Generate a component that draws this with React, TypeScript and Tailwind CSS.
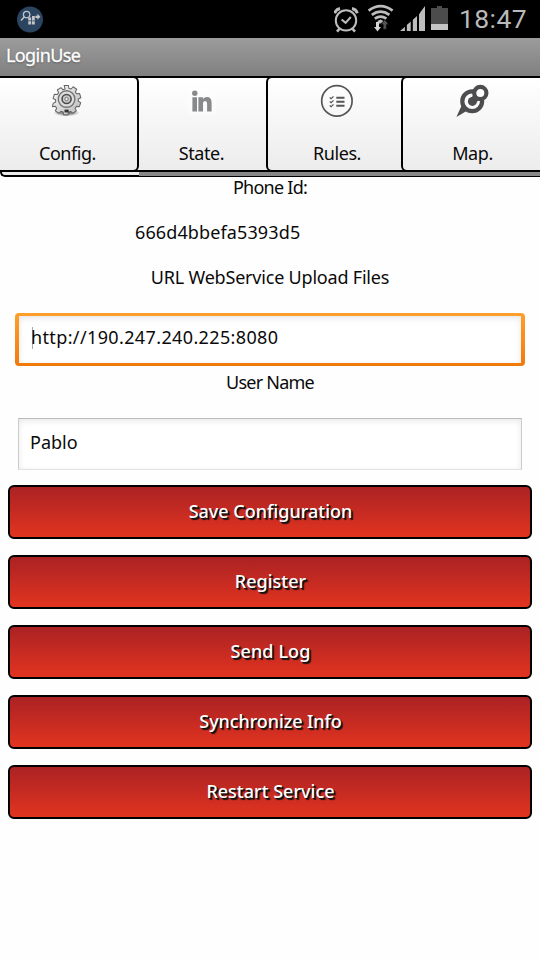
import React from 'react';

function StatusBar() {
  return (
    <div className="flex h-[38px] bg-black">
      <svg className="ml-[17px] mt-[6px] h-[27px] w-[27px]" viewBox="0 0 27 27">
        <circle cx="13" cy="13.5" r="13" fill="#2b4560" />
        <g fill="none" stroke="#bfc4c8">
          <circle cx="9.6" cy="8.6" r="3.2" strokeWidth="1.3" />
          <path d="M7.3 11 4 14.6" strokeWidth="1.5" />
        </g>
        <path fill="#c4c4c4" d="M11.2 11.5h3v3h-3zM15 10h2.8v4.5H15zM11.2 15.3h3v3.2h-3zM15 15.3h2.8v3.2H15zM18.4 9.7h2V7.8l3 3-3 3v-1.9h-2z" />
      </svg>
      <svg className="ml-auto h-[38px] w-[120px]" viewBox="334 0 120 38">
        <g fill="none" stroke="#bdbdbd">
          <circle cx="346" cy="20.4" r="10.2" strokeWidth="2" />
          <path d="m341.6 19.4 4 3.4 5.2-5.8" strokeWidth="2" />
          <path d="M334.6 13.2q1.4-4 5.4-4.7M357.4 13.2q-1.4-4-5.4-4.7" strokeWidth="2.8" />
          <path d="m339.6 28.6-2.6 3m15.4-3 2.6 3" strokeWidth="2.6" />
          <path d="M368.6 10.6q12-9 24 0M371.8 14.8q8.8-6.4 17.6 0M374.8 18.6q5.8-4 11.6 0" strokeWidth="2.7" />
        </g>
        <path fill="#bdbdbd" d="m377.4 21 3.1-1.4 3.1 1.4-3 2.4-2 0z" />
        <path fill="#d5d5d5" d="M376 22h3v5h2l-3.5 4.5L374 27h2z" />
        <path fill="#555" stroke="#000" strokeWidth=".5" d="m384.8 19.6 3.8 4.8h-2.2v4.8h-3.2v-4.8H381z" />
        <path fill="#bdbdbd" d="m400 31 5-4.2V31zM406.5 25.3l4.3-3.9V31h-4.3zM412.4 20.2l4.6-4.2v15h-4.6zM419 14.2l1.2-1.2h3v18H419zM420 12.8l5-6.8v25h-5z" />
        <path stroke="#000" strokeWidth="1.8" d="M405.8 10v21m6-21v21m6.3-21v21" />
        <path fill="#4c4c4c" d="M437 6h5v2h6v16h-17V8h6z" />
        <path fill="#c4c4c4" d="M431 24h17v6h-17z" />
      </svg>
      <div className="ml-[5px] w-[81px] whitespace-nowrap font-['Roboto',sans-serif] text-[26.5px] leading-[37px] tracking-[0.4px] text-[#bababa]">18:47</div>
    </div>
  );
}

function Gear() {
  return (
    <svg className="h-[34px] w-[34px]" viewBox="0.5 0.5 36 36">
      <defs>
        <linearGradient id="metal" x2="1" y2="1">
          <stop stopColor="#fafafa" />
          <stop offset="1" stopColor="#bbb" />
        </linearGradient>
        <radialGradient id="shade">
          <stop stopColor="#222" stopOpacity=".9" />
          <stop offset="1" stopColor="#444" stopOpacity="0" />
        </radialGradient>
      </defs>
      <ellipse cx="17" cy="31" rx="14" ry="3.8" fill="url(#shade)" />
      <path
        fill="url(#metal)"
        stroke="#666"
        strokeWidth="1.1"
        strokeLinejoin="round"
        d="m14.4 2 4.6 0 .4 3 2.5.8 2-2.4 3.8 2.7-1.5 2.8 1.5 2 3-.4 1.4 4.5-2.7 1.3 0 2.5 2.6 1.4-1.5 4.3-3-.3-1.5 2 1.3 2.7-3.7 2.6-2.2-2-2.4.7-.5 3h-4.6l-.5-3-2.4-.8-2.2 2.1-3.7-2.6 1.4-2.8-1.5-2-3 .4L2.8 21l2.6-1.4v-2.5l-2.7-1.3 1.4-4.5 3 .4 1.5-2-1.4-2.8 3.8-2.6 2 2.2 2.4-.8z"
      />
      <circle cx="17" cy="16.4" r="8.8" fill="#dedede" stroke="#747474" strokeWidth="1.5" />
      <circle cx="17" cy="16.4" r="4.8" fill="#c9c9c9" stroke="#4c4c4c" strokeWidth="1.7" />
      <circle cx="17" cy="16.4" r="1.8" fill="#eee" stroke="#666" strokeWidth=".9" />
      <path fill="#333" d="M14.8 27.6h4.4v3h-4.4z" />
    </svg>
  );
}

function LinkedIn() {
  return (
    <svg className="h-[34px] w-[34px]" viewBox="0.6 0 34 34">
      <rect x="3" y="5" width="29" height="26" rx="3" fill="#fff" opacity=".35" />
      <g fill="#88898b">
        <circle cx="10.4" cy="9.2" r="2.7" />
        <path d="M8 13.3h4.6v14.3H8zM14 13.3h4.5V15q1.5-2 4.1-2 4.6 0 4.6 5.8v8.8h-4.5v-8q0-2.6-1.9-2.6-2.2 0-2.2 2.7v7.9H14z" />
      </g>
    </svg>
  );
}

function Checklist() {
  return (
    <svg className="h-[34px] w-[34px]" viewBox="0 0 34 34" fill="none" stroke="#555557">
      <circle cx="16.9" cy="16.9" r="15.2" strokeWidth="1.7" />
      <path d="M16.3 13.8h8.2m-8.2 4h8.2m-8.2 4h8.2" strokeWidth="1.9" />
      <path d="m9.7 13.5 1.4 1.2 2.4-2.4m-3.8 5.2 1.4 1.2 2.4-2.4m-3.8 5.2 1.4 1.2 2.4-2.4" strokeWidth="1.2" />
    </svg>
  );
}

function Pin() {
  return (
    <svg className="h-[34px] w-[34px]" viewBox="0 0 34 34">
      <path fill="#4d4d4f" d="M.4 33 5.4 22l5.2 5z" />
      <circle cx="16.2" cy="17.2" r="9.9" fill="#fafafa" stroke="#4d4d4f" strokeWidth="4.2" />
      <circle cx="16.4" cy="17.4" r="4.5" fill="#4d4d4f" />
      <path stroke="#4d4d4f" strokeWidth="7" d="m17 16.8 5-5" />
      <circle cx="24.3" cy="9" r="6.1" fill="#fff" stroke="#4d4d4f" strokeWidth="4.2" />
    </svg>
  );
}

function Tab({ icon, label, shape }: { icon: React.ReactNode; label: string; shape: string }) {
  return (
    <div className={`-my-[2px] flex h-[96px] flex-col items-center border-y-2 border-black bg-linear-to-b from-white to-[#ececec] pt-[6px] ${shape}`}>
      {icon}
      <span className="mt-[23px] text-[18px] leading-[24px] tracking-[-0.45px]">{label}</span>
    </div>
  );
}

function Tabs() {
  return (
    <div>
      <div className="flex h-[96px] border-y-2 border-black bg-[#f0f0f0]">
        <Tab icon={<Gear />} label="Config." shape="w-[139px] rounded-r-[6px] border-r-2 pr-[2px]" />
        <Tab icon={<LinkedIn />} label="State." shape="w-[127px] pr-[2px]" />
        <Tab icon={<Checklist />} label="Rules." shape="w-[135px] rounded-l-[6px] border-l-2 pl-[5px]" />
        <Tab icon={<Pin />} label="Map." shape="w-[139px] rounded-l-[6px] border-l-2 pl-[2px]" />
      </div>
      <div className="flex h-[5px]">
        <div className="w-[139px] rounded-bl-[5px] border-b-2 border-l-2 border-black bg-[#eaeaea]" />
        <div className="flex-1 border-b border-black bg-[#888]" />
      </div>
    </div>
  );
}

const actions = [
  { label: 'Save Configuration', tracking: 'tracking-[0px]' },
  { label: 'Register', tracking: 'tracking-[0px]' },
  { label: 'Send Log', tracking: 'tracking-[0.1px]' },
  { label: 'Synchronize Info', tracking: 'tracking-[-0.1px]' },
  { label: 'Restart Service', tracking: 'tracking-[0px]' },
];

export default function App() {
  return (
    <div className="flex h-[960px] w-[540px] flex-col overflow-hidden bg-[#fefefe] font-['Noto_Sans',sans-serif] text-[18px] text-[#0a0a0a]">
      <StatusBar />
      <div className="h-[38px] bg-linear-to-b from-[#9c9c9c] to-[#808080] pl-[6px] text-[18px] leading-[35px] tracking-[-0.6px] text-white [-webkit-text-stroke:0.3px_white] [text-shadow:0_1px_2px_#555]">LoginUse</div>
      <Tabs />
      <div className="h-[22px] text-center leading-[20px] tracking-[-0.75px]">Phone Id:</div>
      <div className="mt-[23px] h-[22px] pl-[135px] leading-[20px] tracking-[0.12px]">666d4bbefa5393d5</div>
      <div className="mt-[23px] h-[22px] text-center leading-[20px] tracking-[-0.2px]">URL WebService Upload Files</div>
      <div className="mx-[15px] mt-[24px] h-[53px] rounded-[4px] bg-linear-to-b from-[#ff9f2a] to-[#f07a08] px-[4px] py-[3px]">
        <div className="flex h-[47px] items-center bg-white pb-[5px] pl-[13px] shadow-[inset_0_2px_6px_#e4e4e4]">
          <span className="mt-[2px] h-[22px] w-px bg-[#aaa]" />
          <span className="-ml-[2px] leading-[22px] tracking-[0.37px]">http://190.247.240.225:8080</span>
        </div>
      </div>
      <div className="mt-[6px] h-[22px] text-center leading-[20px] tracking-[-0.75px]">User Name</div>
      <div className="mx-[18px] mt-[24px] h-[52px] border border-[#ccc] border-b-[#e2e2e2] border-t-[#bbb] bg-white pl-[11px] leading-[47px] shadow-[inset_0_2px_6px_#e8e8e8]">Pablo</div>
      <div className="mx-[8px] mt-[15px] flex flex-col gap-[16px]">
        {actions.map((a) => (
          <div key={a.label} className={`h-[54px] rounded-[6px] border-2 border-black bg-linear-to-b from-[#ab2223] to-[#e2341f] pl-[1px] text-center text-[18px] font-medium leading-[48px] text-white [text-shadow:1px_1px_0_#111,2px_2px_1px_#111] ${a.tracking}`}>{a.label}</div>
        ))}
      </div>
    </div>
  );
}
